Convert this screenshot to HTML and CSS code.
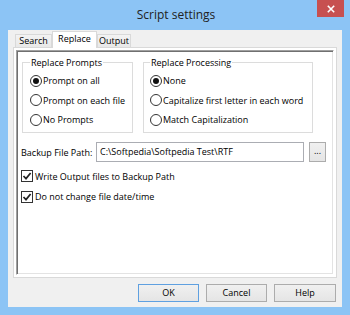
FILE: index.html
```html
<!DOCTYPE html>
<html>
<head>
<meta charset="utf-8">
<link rel="stylesheet" href="styles.css">
</head>
<body>
<div class="window">
  <div class="titlebar">
    <span></span>
    <div class="title">Script settings</div>
    <div class="close-wrap">
      <div class="close">
        <svg width="8" height="8" viewBox="0 0 8 8"><path d="M0.8 0.8 L7.2 7.2 M7.2 0.8 L0.8 7.2" stroke="#fff" stroke-width="1.6"/></svg>
      </div>
    </div>
  </div>
  <div class="client">
    <div class="tabstrip">
      <div class="tab t-search">Search</div>
      <div class="tab active t-replace">Replace</div>
      <div class="tab t-output">Output</div>
    </div>
    <div class="page">
      <div class="inner">
        <div class="groups">
          <fieldset class="group g1">
            <legend>Replace Prompts</legend>
            <div class="opt"><span class="rb on"></span><span>Prompt on all</span></div>
            <div class="opt"><span class="rb"></span><span>Prompt on each file</span></div>
            <div class="opt"><span class="rb"></span><span>No Prompts</span></div>
          </fieldset>
          <fieldset class="group g2">
            <legend>Replace Processing</legend>
            <div class="opt"><span class="rb on"></span><span>None</span></div>
            <div class="opt"><span class="rb"></span><span>Capitalize first letter in each word</span></div>
            <div class="opt"><span class="rb"></span><span>Match Capitalization</span></div>
          </fieldset>
        </div>
        <div class="pathrow">
          <span class="plabel">Backup File Path:</span>
          <div class="pinput">C:\Softpedia\Softpedia Test\RTF</div>
          <div class="browse">...</div>
        </div>
        <div class="checks">
          <div class="chk"><span class="cb"><svg width="10" height="10" viewBox="0 0 10 10"><path d="M1.5 5 L4 7.6 L8.6 2" fill="none" stroke="#222" stroke-width="1.7"/></svg></span><span>Write Output files to Backup Path</span></div>
          <div class="chk"><span class="cb"><svg width="10" height="10" viewBox="0 0 10 10"><path d="M1.5 5 L4 7.6 L8.6 2" fill="none" stroke="#222" stroke-width="1.7"/></svg></span><span>Do not change file date/time</span></div>
        </div>
      </div>
    </div>
    <div class="buttons">
      <div class="btn default">OK</div>
      <div class="btn">Cancel</div>
      <div class="btn help">Help</div>
    </div>
  </div>
</div>
</body>
</html>
```
FILE: styles.css
```css
* { box-sizing: border-box; }
html, body { margin: 0; padding: 0; }
body {
  width: 350px;
  height: 315px;
  overflow: hidden;
  font-family: "Open Sans", "Noto Sans", sans-serif;
  font-size: 9px;
  color: #000;
}
.window {
  width: 350px;
  height: 315px;
  background: #8cc4f5;
  padding: 0 8px 8px 8px;
  display: flex;
  flex-direction: column;
}
.titlebar {
  height: 30px;
  flex: none;
  display: grid;
  grid-template-columns: 1fr auto 1fr;
  margin-right: -2px;
}
.title {
  font-size: 12px;
  color: #222;
  align-self: center;
  margin-top: -2px;
}
.close-wrap {
  display: flex;
  justify-content: flex-end;
  align-items: flex-start;
}
.close {
  width: 27px;
  height: 17px;
  background: #c75050;
  display: flex;
  align-items: center;
  justify-content: center;
}
.client {
  flex: 1;
  background: #f0f0f0;
  padding: 1px 5px 5px 5px;
  display: flex;
  flex-direction: column;
}
.tabstrip {
  height: 17px;
  flex: none;
  display: flex;
  align-items: flex-end;
  padding-left: 2px;
  margin-bottom: -1px;
  position: relative;
  z-index: 1;
}
.tab {
  height: 13px;
  margin-bottom: 1px;
  border: 1px solid #d9d9d9;
  border-bottom: none;
  background: linear-gradient(#f3f3f3, #e8e8e8);
  text-align: center;
  line-height: 12px;
}
.t-search { width: 37px; }
.t-replace { width: 45px; }
.t-output { width: 34px; }
.tab.active {
  height: 17px;
  margin-bottom: 0;
  background: #fff;
  line-height: 13px;
}
.page {
  flex: 1;
  border: 1px solid #d9d9d9;
  background: #fff;
  padding: 2px;
  display: flex;
}
.inner {
  flex: 1;
  border-style: solid;
  border-width: 1px;
  border-color: #a0a0a0 #fff #fff #a0a0a0;
  box-shadow: inset 1px 1px #707070, inset -1px -1px #e3e3e3;
  padding: 4px 0 0 0;
}
.groups {
  display: flex;
  gap: 10px;
  padding-left: 5px;
}
.group {
  margin: 0;
  min-width: 0;
  border: 1px solid #dcdcdc;
  padding: 1px 0 2px 7px;
}
.g1 { width: 111px; }
.g2 { width: 170px; padding-left: 6px; }
legend {
  padding: 0 1px;
  line-height: 15px;
}
.opt {
  height: 19.5px;
  display: flex;
  align-items: center;
  gap: 1px;
  white-space: nowrap;
}
.rb {
  width: 12px;
  height: 12px;
  flex: none;
  border: 1px solid #333;
  border-radius: 50%;
  background: #fff;
  display: flex;
  align-items: center;
  justify-content: center;
}
.rb.on::after {
  content: "";
  width: 6px;
  height: 6px;
  border-radius: 50%;
  background: #111;
}
.pathrow {
  display: flex;
  align-items: center;
  margin-top: 9.5px;
  padding-left: 4px;
  height: 20px;
}
.plabel { width: 75px; flex: none; }
.pinput {
  width: 208px;
  height: 20px;
  border: 1px solid #abadb3;
  background: #fff;
  padding-left: 3px;
  line-height: 17px;
  white-space: nowrap;
}
.browse {
  width: 17px;
  height: 20px;
  margin-left: 5px;
  border: 1px solid #acacac;
  background: linear-gradient(#f0f0f0, #e5e5e5);
  text-align: center;
  line-height: 16px;
}
.checks {
  margin-top: 4px;
  padding-left: 4px;
}
.chk {
  height: 20.5px;
  display: flex;
  align-items: center;
  gap: 2px;
}
.cb {
  width: 12px;
  height: 12px;
  flex: none;
  border: 1px solid #333;
  background: #fff;
  display: flex;
  align-items: center;
  justify-content: center;
}
.buttons {
  flex: none;
  height: 18px;
  margin-top: 6px;
  display: flex;
  justify-content: flex-end;
  gap: 7px;
  padding-right: 1px;
}
.btn {
  width: 61px;
  height: 18px;
  border: 1px solid #acacac;
  background: linear-gradient(#f0f0f0, #e5e5e5);
  text-align: center;
  line-height: 16px;
}
.btn.help { width: 62px; }
.btn.default { border-color: #5fa0e0; }
```
